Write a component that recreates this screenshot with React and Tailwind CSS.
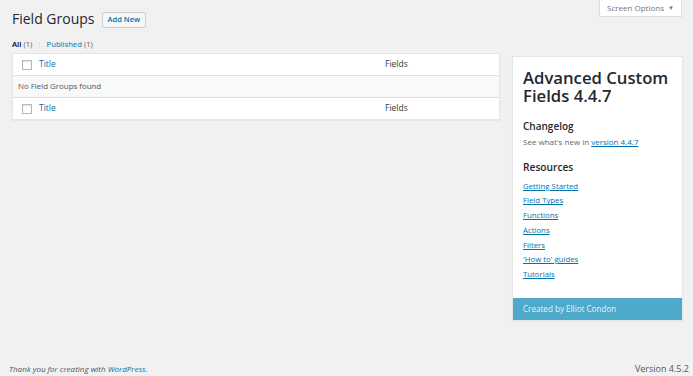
import React from 'react';

const resources = ['Getting Started', 'Field Types', 'Functions', 'Actions', 'Filters', "'How to' guides", 'Tutorials'];

function Checkbox() {
  return <span className="block w-[10px] h-[10px] bg-white border border-[#b4b9be] shadow-[inset_0_1px_2px_rgba(0,0,0,0.1)]"></span>;
}

function HeadRow() {
  return (
    <div className="flex items-center h-[21px] bg-white">
      <div className="w-[26px] flex justify-center pl-[2px]"><Checkbox /></div>
      <a className="w-[346px] text-[#0073aa] text-[8.5px]">Title</a>
      <div className="text-[8.5px] text-[#32373c]">Fields</div>
    </div>
  );
}

export default function App() {
  return (
    <div className="relative min-h-[376px] bg-[#f1f1f1] font-['Open_Sans',sans-serif] text-[#444]">

      {/* screen options tab */}
      <div className="absolute top-0 right-[11px] w-[83px] h-[17px] bg-white border border-t-0 border-[#ddd] flex items-center justify-center gap-[4px] text-[8px] text-[#72777c]">
        Screen Options <span className="text-[6px] text-[#72777c]">▼</span>
      </div>

      <div className="pl-[12px] pr-[10px] pt-[9px]">
        <div className="flex items-center gap-[7px] h-[20px]">
          <h1 className="text-[14px] text-[#23282d] leading-none">Field Groups</h1>
          <button className="h-[16px] px-[5px] mt-[2px] bg-[#f7f7f7] border border-[#ccc] rounded-[2px] text-[7.5px] font-semibold text-[#0073aa]">Add New</button>
        </div>

        <div className="flex gap-[12px]">
          <div className="w-[488px]">
            <div className="mt-[9px] h-[14px] flex items-center text-[7.7px] text-[#666]">
              <span className="font-semibold text-black">All</span>
              <span className="ml-[2px]">(1)</span>
              <span className="mx-[5px] text-[#ddd]">|</span>
              <span className="text-[#0073aa]">Published</span>
              <span className="ml-[2px]">(1)</span>
            </div>

            <div className="mt-[1px] border border-[#e5e5e5] shadow-[0_1px_1px_rgba(0,0,0,0.04)]">
              <HeadRow />
              <div className="h-[23px] flex items-center pl-[5px] bg-[#f9f9f9] border-y border-[#e1e1e1] text-[7.9px] text-[#555]">No Field Groups found</div>
              <HeadRow />
            </div>
          </div>

          <div className="w-[171px] mt-[27px] self-start bg-white border border-[#e5e5e5] shadow-[0_1px_1px_rgba(0,0,0,0.04)]">
            <div className="px-[10px] pt-[12px] pb-[16px]">
              <h2 className="text-[16.7px] font-semibold leading-[18px] text-[#23282d]">Advanced Custom Fields 4.4.7</h2>
              <h3 className="mt-[14px] text-[10px] font-semibold text-[#23282d]">Changelog</h3>
              <p className="mt-[2px] text-[8px] text-[#666]">See what's new in <a className="text-[#0073aa] underline">version 4.4.7</a></p>
              <h3 className="mt-[12px] text-[10.2px] font-semibold text-[#23282d]">Resources</h3>
              <ul className="mt-[4px] flex flex-col">
                {resources.map((r) => (
                  <li key={r} className="h-[14.7px] flex items-center">
                    <a className="text-[7.8px] text-[#0073aa] underline">{r}</a>
                  </li>
                ))}
              </ul>
            </div>
            <div className="h-[22px] flex items-center px-[10px] bg-[#4fa9cb] text-[8.1px] text-[#e6f3f8]">Created by Elliot Condon</div>
          </div>
        </div>
      </div>

      <div className="absolute bottom-0 left-0 right-0 flex justify-between items-end pl-[9px] pr-[4px] pb-[1px] text-[8px] text-[#555]">
        <span className="italic">Thank you for creating with <a className="text-[#0073aa]">WordPress</a>.</span>
        <span className="text-[9px]">Version 4.5.2</span>
      </div>
    </div>
  );
}
